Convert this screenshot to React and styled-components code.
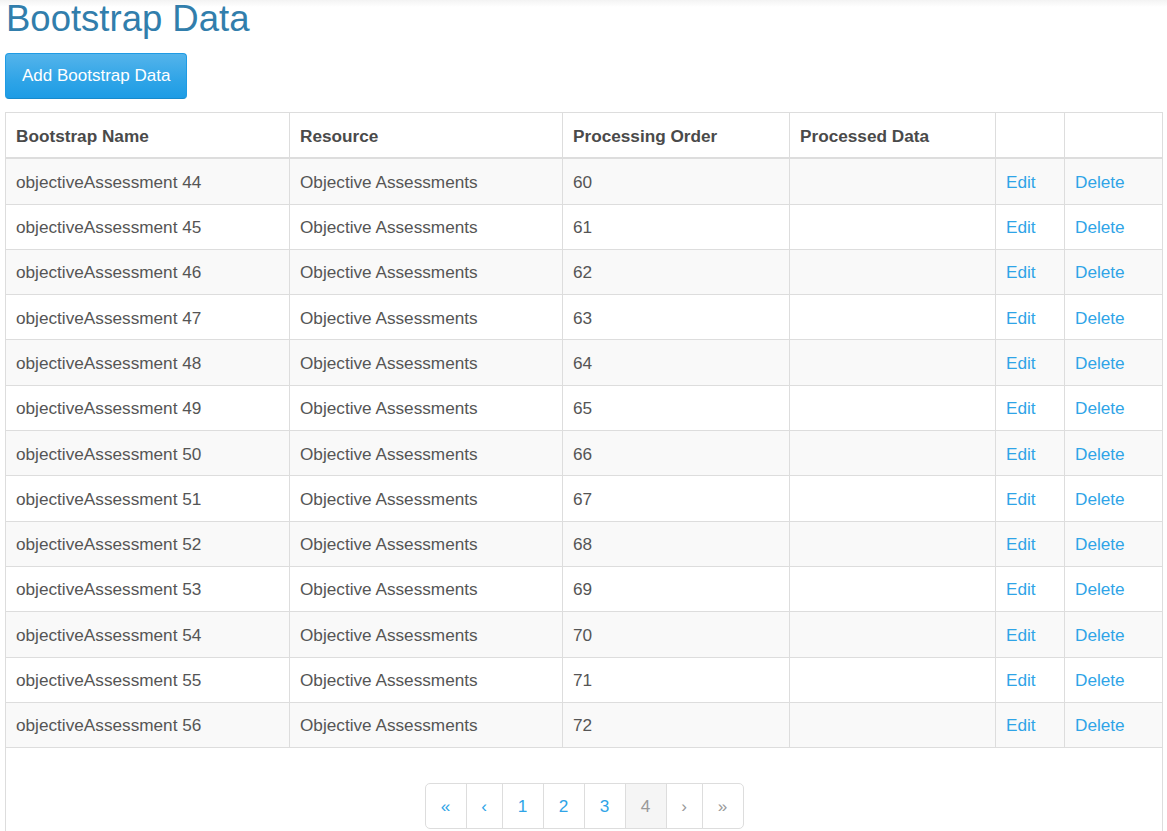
import React from "react";
import styled, { createGlobalStyle } from "styled-components";

const GlobalStyle = createGlobalStyle`
	html, body {
		margin: 0;
		padding: 0;
	}
	body {
		font-family: "Liberation Sans", Arial, Helvetica, sans-serif;
		font-size: 17.2px;
		line-height: 24px;
		color: #555555;
		background: linear-gradient(#f3f3f3, #ffffff 7px) no-repeat #ffffff;
	}
`;

const Page = styled.div`
	padding: 0 4px 0 5px;
`;

const Title = styled.h1`
	margin: -1px 0 0 1px;
	font-size: 36.5px;
	line-height: 40px;
	font-weight: 400;
	color: #317eac;
`;

const AddButton = styled.button`
	display: inline-block;
	margin-top: 14px;
	padding: 10px 16px;
	font-family: inherit;
	font-size: 17px;
	line-height: 24px;
	color: #ffffff;
	border: 1px solid #1f9be4;
	border-bottom-color: #178acc;
	border-radius: 4px;
	background-image: linear-gradient(#54b4eb, #2fa4e7 60%, #1d9ce5);
	cursor: pointer;
`;

const Panel = styled.div`
	margin-top: 13px;
	border: 1px solid #dddddd;
	border-bottom: none;
	padding-bottom: 2px;
`;

const Table = styled.table`
	width: 100%;
	border-collapse: collapse;
	table-layout: fixed;

	th,
	td {
		border: 1px solid #dddddd;
		padding: 10.5px 10px 9.5px;
		text-align: left;
		vertical-align: top;
		line-height: 24.3px;
		white-space: nowrap;
	}
	tr > :first-child {
		border-left: none;
	}
	tr > :last-child {
		border-right: none;
	}
	thead tr:first-child th {
		border-top: none;
	}
	th {
		font-weight: 700;
		color: #4a4a4a;
		border-bottom-width: 2px;
	}
	tbody tr:nth-child(odd) {
		background: #f9f9f9;
	}
`;

const Head = styled.th`
	width: ${(p) => (p.$w ? `${p.$w - 21}px` : "auto")};
`;

const RowLink = styled.a`
	color: #2fa4e7;
	text-decoration: none;
	cursor: pointer;
`;

const Pager = styled.ul`
	display: flex;
	justify-content: center;
	list-style: none;
	margin: 35px 0 0;
	padding: 0;
`;

const PageItem = styled.li`
	padding: 10px 14.5px;
	min-width: ${(p) => (p.$narrow ? 6 : 11)}px;
	text-align: center;
	border: 1px solid #dddddd;
	margin-left: -1px;
	color: ${(p) => (p.$active || p.$disabled ? "#999999" : "#2fa4e7")};
	background: ${(p) => (p.$active ? "#f5f5f5" : "#ffffff")};
	cursor: pointer;

	&:first-child {
		margin-left: 0;
		border-radius: 5px 0 0 5px;
	}
	&:last-child {
		border-radius: 0 5px 5px 0;
	}
`;

const columns = [
	{ label: "Bootstrap Name", w: 284 },
	{ label: "Resource", w: 273 },
	{ label: "Processing Order", w: 227 },
	{ label: "Processed Data", w: 206 },
	{ label: "", w: 69 },
	{ label: "" },
];

const rows = Array.from({ length: 13 }, (_, i) => ({
	name: `objectiveAssessment ${44 + i}`,
	resource: "Objective Assessments",
	order: 60 + i,
}));

const pages = [
	{ label: "«" },
	{ label: "‹", narrow: true },
	{ label: "1" },
	{ label: "2" },
	{ label: "3" },
	{ label: "4", active: true },
	{ label: "›", narrow: true, disabled: true },
	{ label: "»", disabled: true },
];

const App = () => {
	return (
		<Page>
			<GlobalStyle />
			<Title>Bootstrap Data</Title>
			<AddButton>Add Bootstrap Data</AddButton>
			<Panel>
				<Table>
					<thead>
						<tr>
							{columns.map((c, i) => (
								<Head key={i} $w={c.w}>
									{c.label}
								</Head>
							))}
						</tr>
					</thead>
					<tbody>
						{rows.map((r) => (
							<tr key={r.name}>
								<td>{r.name}</td>
								<td>{r.resource}</td>
								<td>{r.order}</td>
								<td></td>
								<td>
									<RowLink>Edit</RowLink>
								</td>
								<td>
									<RowLink>Delete</RowLink>
								</td>
							</tr>
						))}
					</tbody>
				</Table>
				<Pager>
					{pages.map((p) => (
						<PageItem
							key={p.label}
							$active={p.active}
							$disabled={p.disabled}
							$narrow={p.narrow}
						>
							{p.label}
						</PageItem>
					))}
				</Pager>
			</Panel>
		</Page>
	);
};

export default App;
